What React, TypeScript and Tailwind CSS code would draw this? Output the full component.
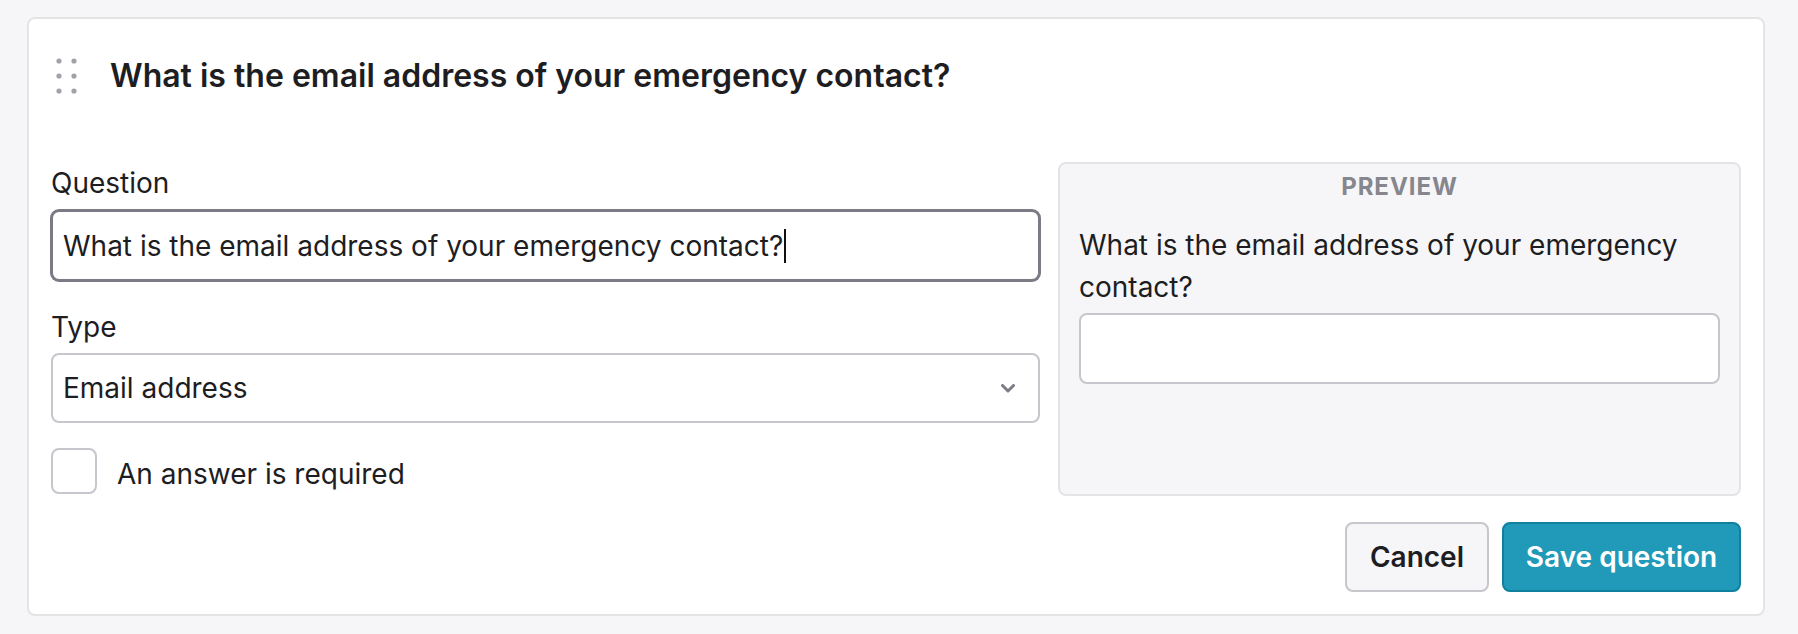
import React from "react";

export default function App() {
  return (
    <div
      className="h-[634px] w-full bg-[#f6f6f8] pt-[17px] pl-[27px] pr-[33px] text-[#1d1d22]"
      style={{ fontFamily: "Inter, 'Noto Sans', sans-serif" }}
    >
      <div className="rounded-[8px] border-2 border-[#e4e4e7] bg-white px-[22px] pb-[22px]">
        {/* Header */}
        <div className="flex h-[118px] items-center pb-[4px]">
          <svg width="21" height="36" viewBox="0 0 21 36" className="ml-[5px] shrink-0" fill="#a1a1aa">
            <circle cx="3" cy="3" r="2.6" />
            <circle cx="18" cy="3" r="2.6" />
            <circle cx="3" cy="18" r="2.6" />
            <circle cx="18" cy="18" r="2.6" />
            <circle cx="3" cy="33" r="2.6" />
            <circle cx="18" cy="33" r="2.6" />
          </svg>
          <h2 className="ml-[33px] text-[32px] font-semibold leading-[42px] text-[#1d1d22]">
            What is the email address of your emergency contact?
          </h2>
        </div>

        {/* Body */}
        <div className="mt-[25px] grid grid-cols-[989px_683px] gap-[18px]">
          {/* Left column */}
          <div className="flex flex-col">
            <label className="text-[28px] leading-[42px]">Question</label>
            <div className="mt-[6px] flex h-[71px] items-center rounded-[8px] border-2 border-[#7b7b85] bg-white px-[10px] shadow-[0_0_0_1px_#7b7b85]">
              <span className="text-[28px] leading-[42px] whitespace-nowrap">
                What is the email address of your emergency contact?
              </span>
              <span className="ml-[1px] inline-block h-[34px] w-[2px] bg-[#111114]" />
            </div>

            <label className="mt-[25px] text-[28px] leading-[42px]">Type</label>
            <div className="mt-[5px] flex h-[70px] items-center justify-between rounded-[8px] border-2 border-[#c6c6cc] bg-white pl-[10px] pr-[23px]">
              <span className="text-[28px] leading-[42px]">Email address</span>
              <svg width="14" height="9" viewBox="0 0 14 9" fill="none">
                <path d="M1.5 1.5 L7 7 L12.5 1.5" stroke="#7c7c86" strokeWidth="3" strokeLinecap="round" strokeLinejoin="round" />
              </svg>
            </div>

            <div className="mt-[24px] flex items-center">
              <div className="h-[46px] w-[46px] shrink-0 rounded-[8px] border-2 border-[#c6c6cc] bg-white" />
              <span className="ml-[20px] pt-[6px] text-[28px] leading-[42px]">An answer is required</span>
            </div>
          </div>

          {/* Right column: preview */}
          <div className="flex h-[334px] flex-col rounded-[8px] border-2 border-[#e4e4e7] bg-[#f6f6f8] px-[19px]">
            <div className="mt-[7px] text-center text-[24px] font-bold leading-[32px] tracking-[0.04em] text-[#86868f]">
              PREVIEW
            </div>
            <p className="mt-[21px] text-[28px] leading-[42px]">
              What is the email address of your emergency contact?
            </p>
            <div className="mt-[5px] h-[71px] w-[641px] rounded-[8px] border-2 border-[#c6c6cc] bg-white" />
          </div>
        </div>

        {/* Footer buttons */}
        <div className="mt-[26px] flex justify-end gap-[13px]">
          <button className="flex h-[70px] w-[144px] items-center justify-center rounded-[8px] border-2 border-[#c6c6cc] bg-[#f6f6f8] text-[28px] font-semibold text-[#1d1d22]">
            Cancel
          </button>
          <button className="flex h-[70px] w-[239px] items-center justify-center rounded-[8px] border-2 border-[#0f819e] bg-[#2199b8] text-[28px] font-semibold text-white">
            Save question
          </button>
        </div>
      </div>
    </div>
  );
}
